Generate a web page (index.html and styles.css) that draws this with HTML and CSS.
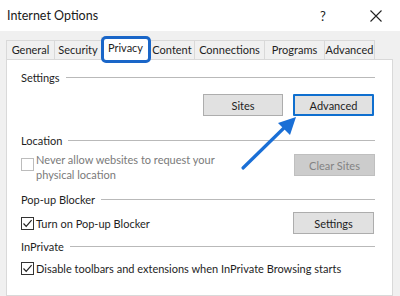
FILE: index.html
```html
<!DOCTYPE html>
<html>
<head>
<meta charset="utf-8">
<link rel="stylesheet" href="styles.css">
</head>
<body>
<div class="window">
  <div class="titlebar">
    <span class="title">Internet Options</span>
    <span class="help">?</span>
    <span class="close">
      <svg width="12" height="12" viewBox="0 0 12 12"><path d="M0.5 0.5 L11.5 11.5 M11.5 0.5 L0.5 11.5" stroke="#222" stroke-width="1.1" fill="none"/></svg>
    </span>
  </div>
  <div class="tabs">
    <div class="tab t-general">General</div>
    <div class="tab t-security">Security</div>
    <div class="tab active t-privacy">Privacy</div>
    <div class="tab t-content">Content</div>
    <div class="tab t-connections">Connections</div>
    <div class="tab t-programs">Programs</div>
    <div class="tab t-advanced">Advanced</div>
  </div>
  <div class="panel">
    <div class="group-head"><span>Settings</span><i class="rule"></i></div>
    <div class="row buttons-row">
      <button class="btn">Sites</button>
      <button class="btn default">Advanced</button>
    </div>

    <div class="group-head location-head"><span>Location</span><i class="rule"></i></div>
    <div class="row location-row">
      <label class="check disabled">
        <span class="box"></span>
        <span class="label-text">Never allow websites to request your<br>physical location</span>
      </label>
      <button class="btn disabled">Clear Sites</button>
    </div>

    <div class="group-head popup-head"><span>Pop-up Blocker</span><i class="rule"></i></div>
    <div class="row popup-row">
      <label class="check">
        <span class="box"><svg width="11" height="11" viewBox="0 0 11 11"><path d="M1.5 5.5 L4.2 8.3 L9.6 2.2" stroke="#222" stroke-width="1.2" fill="none"/></svg></span>
        <span class="label-text">Turn on Pop-up Blocker</span>
      </label>
      <button class="btn">Settings</button>
    </div>

    <div class="group-head inprivate-head"><span>InPrivate</span><i class="rule"></i></div>
    <div class="row inprivate-row">
      <label class="check">
        <span class="box"><svg width="11" height="11" viewBox="0 0 11 11"><path d="M1.5 5.5 L4.2 8.3 L9.6 2.2" stroke="#222" stroke-width="1.2" fill="none"/></svg></span>
        <span class="label-text">Disable toolbars and extensions when InPrivate Browsing starts</span>
      </label>
    </div>
  </div>

  <div class="highlight"></div>
  <svg class="arrow" width="400" height="296" viewBox="0 0 400 296">
    <path d="M243 168 L287 125" stroke="#1a6fd6" stroke-width="3.2" stroke-linecap="round" fill="none"/>
    <path d="M296 117 L278 123 L290 135 Z" fill="#1a6fd6"/>
  </svg>
</div>
</body>
</html>
```

FILE: styles.css
```css
* { box-sizing: border-box; }
html, body {
  margin: 0;
  padding: 0;
  width: 400px;
  height: 296px;
  overflow: hidden;
}
body {
  font-family: Lato, "Noto Sans", sans-serif;
  font-size: 11px;
  color: #1e1e1e;
  background: #f0f0f0;
}
.window {
  position: relative;
  width: 400px;
  height: 296px;
  display: flex;
  flex-direction: column;
}
.titlebar {
  height: 31px;
  background: #ffffff;
  display: flex;
  align-items: center;
  padding-left: 7px;
  flex-shrink: 0;
}
.title {
  font-size: 12.5px;
  color: #1a1a1a;
  flex: 1;
  padding-bottom: 1px;
}
.help {
  font-size: 13px;
  color: #222;
  width: 12px;
  margin-right: 38px;
}
.close {
  width: 12px;
  height: 12px;
  margin-right: 18px;
  display: flex;
}
.tabs {
  display: flex;
  align-items: flex-end;
  height: 28px;
  padding-left: 6px;
  flex-shrink: 0;
}
.tab {
  height: 19px;
  line-height: 17px;
  text-align: center;
  border: 1px solid #d9d9d9;
  border-bottom: none;
  margin-right: -1px;
  background: #f0f0f0;
  white-space: nowrap;
}
.t-general { width: 49px; }
.t-security { width: 48px; }
.t-privacy { width: 49px; }
.t-content { width: 46px; }
.t-connections { width: 71px; }
.t-programs { width: 61px; }
.t-advanced { width: 51px; }
.tab.active {
  background: #fff;
  line-height: 19px;
  position: relative;
  z-index: 1;
  margin-bottom: -1px;
  height: 23px;
}
.panel {
  flex: 1;
  margin: 0 7px 0 6px;
  background: #fff;
  border: 1px solid #d9d9d9;
  padding: 9px 17px 0 14px;
}
.group-head {
  display: flex;
  align-items: center;
  gap: 6px;
  height: 16px;
}
.group-head span {
  white-space: nowrap;
}
.rule {
  flex: 1;
  height: 1px;
  background: #b9b9b9;
  margin-top: 1px;
}
.row {
  display: flex;
  align-items: center;
}
.buttons-row {
  margin-top: 9px;
  justify-content: flex-end;
  gap: 10px;
  padding-right: 1px;
}
.btn {
  width: 80px;
  height: 22px;
  font-family: inherit;
  font-size: 11px;
  color: #1e1e1e;
  background: #e1e1e1;
  border: 1px solid #adadad;
  padding: 0;
  margin: 0;
}
.btn.default {
  width: 81px;
  border: 2px solid #0f6fcf;
  border-radius: 1px;
}
.btn.disabled {
  background: #cccccc;
  border-color: #bfbfbf;
  color: #838383;
}
.location-head { margin-top: 16px; }
.location-row {
  margin-top: 4px;
  justify-content: space-between;
  align-items: flex-start;
}
.location-row .btn {
  margin-top: 2px;
  width: 81px;
}
.check {
  display: flex;
  align-items: flex-start;
  gap: 2px;
  line-height: 15px;
  white-space: nowrap;
}
.box {
  width: 13px;
  height: 13px;
  border: 1px solid #333;
  background: #fff;
  display: flex;
  align-items: center;
  justify-content: center;
  flex-shrink: 0;
  margin-top: 1px;
}
.check.disabled .box {
  border-color: #bcbcbc;
  margin-top: 6px;
}
.check.disabled .label-text {
  color: #7a7a7a;
}
.popup-head { margin-top: 9px; }
.popup-row {
  margin-top: 5px;
  justify-content: space-between;
  padding-right: 1px;
}
.popup-row .btn { width: 81px; }
.inprivate-head { margin-top: 4px; }
.inprivate-row { margin-top: 7px; }

.highlight {
  position: absolute;
  left: 101px;
  top: 36px;
  width: 50px;
  height: 27px;
  border: 3px solid #1a66c8;
  border-radius: 5px;
  z-index: 5;
}
.arrow {
  position: absolute;
  left: 0;
  top: 0;
  z-index: 6;
  pointer-events: none;
}
```
